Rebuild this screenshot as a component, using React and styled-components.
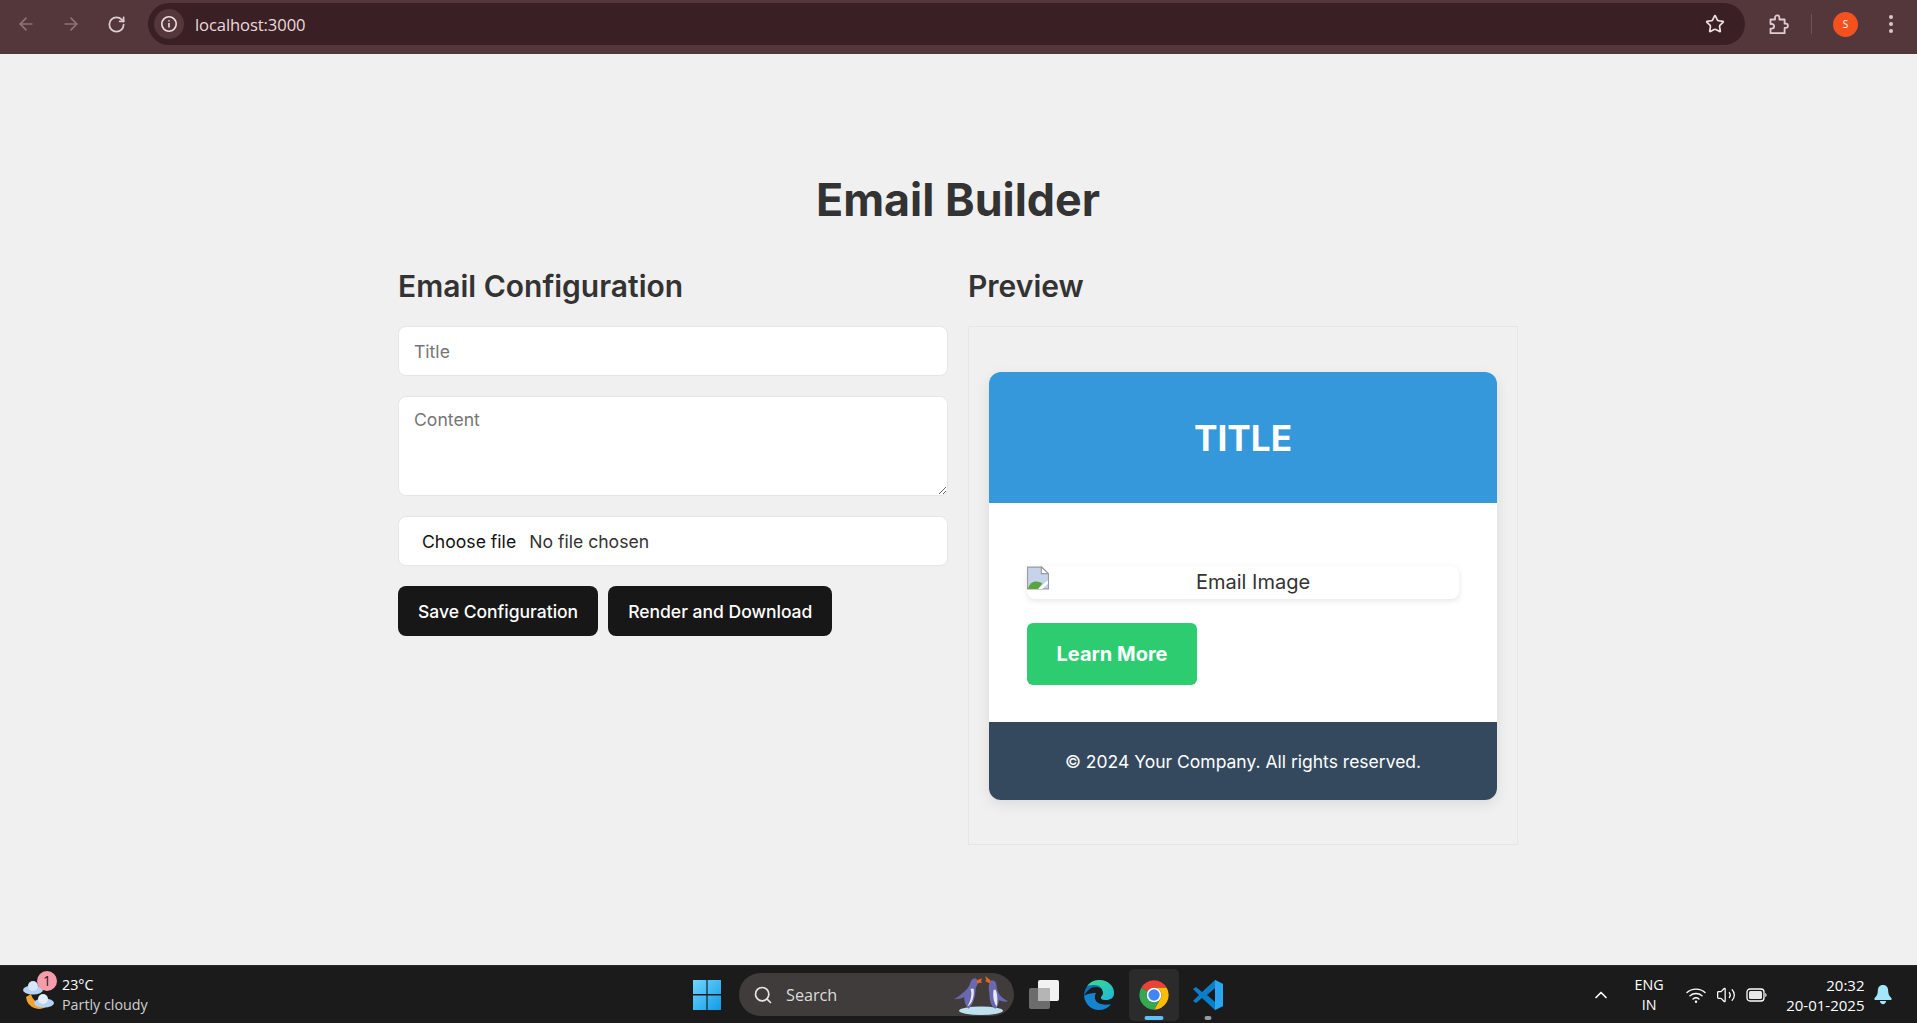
import React from "react";
import styled, { createGlobalStyle } from "styled-components";
import { ArrowLeft, ArrowRight, RotateCw, Star, ChevronUp, Search as SearchGlyph, Volume2 } from "lucide-react";

const Global = createGlobalStyle`
  html, body { margin: 0; padding: 0; height: 100%; overflow: hidden; }
  body { font-family: Inter, "Liberation Sans", sans-serif; background: #f0f0f0; color: #333; }
  * { box-sizing: border-box; }
`;
const Screen = styled.div`display:flex;flex-direction:column;height:1023px;overflow:hidden;`;
const Toolbar = styled.header`height:54px;flex:none;background:#53373b;display:flex;align-items:center;padding:0 0 6px 14px;`;
const NavBtn = styled.span`width:24px;height:24px;display:flex;align-items:center;justify-content:center;margin-right:${p=>p.$mr||21}px;color:${p=>p.$dim?"#8d7478":"#e0cdd0"};`;
const Omnibox = styled.div`width:1597px;height:42px;margin-left:19px;border-radius:21px;background:#3a2024;display:flex;align-items:center;padding:0 20px 0 6px;`;
const InfoChip = styled.span`width:30px;height:30px;border-radius:50%;background:#53373b;display:flex;align-items:center;justify-content:center;margin-right:11px;`;
const Url = styled.span`flex:1;font:16.6px "Open Sans","Liberation Sans",sans-serif;color:#ead9db;letter-spacing:-.1px;`;
const ToolRight = styled.div`display:flex;align-items:center;flex:1;padding-left:23px;`;
const Sep = styled.span`width:1px;height:20px;background:#6f5458;margin:0 21px 0 21px;`;
const Avatar = styled.span`width:25px;height:25px;border-radius:50%;background:#f4511e;color:#fff;font:10px "Open Sans",sans-serif;display:flex;align-items:center;justify-content:center;`;
const Dots = styled.span`display:flex;flex-direction:column;gap:3px;margin-left:31px;`;
const Dot = styled.i`width:4px;height:4px;border-radius:50%;background:#dcc8cb;display:block;`;

const Main = styled.main`flex:1;min-height:0;display:flex;flex-direction:column;align-items:center;padding:119px 1px 0 0;`;
const Heading = styled.h1`margin:0 0 42px;font-size:44.8px;line-height:54px;font-weight:700;color:#333;`;
const Columns = styled.div`width:1120px;display:grid;grid-template-columns:550px 550px;gap:20px;`;
const Column = styled.section`display:flex;flex-direction:column;`;
const SubHeading = styled.h2`margin:0 0 22px;font-size:30px;line-height:35px;font-weight:600;color:#333;`;
const Field = styled.input`width:100%;height:50px;padding:0 15px;margin-bottom:20px;background:#fff;border:1px solid #e6e6e6;border-radius:8px;font:17.6px Inter,sans-serif;color:#333;&::placeholder{color:#757575;}`;
const Area = styled.textarea`display:block;width:100%;height:100px;padding:12px 15px;margin-bottom:20px;background:#fff;border:1px solid #e6e6e6;border-radius:8px;font:17.6px Inter,sans-serif;color:#333;&::placeholder{color:#757575;}`;
const FilePick = styled.div`width:100%;height:50px;padding:0 23px;margin-bottom:20px;background:#fff;border:1px solid #e6e6e6;border-radius:8px;display:flex;align-items:center;font-size:17.6px;`;
const ChooseLabel = styled.span`color:#111;margin-right:13px;`;
const NoFile = styled.span`color:#333;`;
const Actions = styled.div`display:flex;gap:10px;`;
const DarkBtn = styled.button`height:50px;padding:0 20px;border:none;border-radius:8px;background:#171717;color:#fff;font:500 17.5px Inter,sans-serif;`;

const Preview = styled.div`height:519px;padding:45px 20px;border:1px solid #e6e6e6;background:#f0f0f0;`;
const Card = styled.article`border-radius:12px;overflow:hidden;background:#fff;box-shadow:0 4px 14px rgba(0,0,0,.09);`;
const CardHead = styled.div`height:131px;background:#3498db;display:flex;align-items:center;justify-content:center;color:#fff;font-size:35.2px;font-weight:700;`;
const CardBody = styled.div`padding:63px 38px 37px;background:#fff;`;
const ImageBox = styled.div`height:33px;border-radius:8px;background:#fff;box-shadow:0 2px 6px rgba(0,0,0,.1);text-align:center;font-size:20px;line-height:33px;color:#333;margin-bottom:24px;position:relative;`;
const Broken = styled.svg`position:absolute;left:0;top:0;`;
const AltText = styled.span`padding-left:20px;`;
const GreenBtn = styled.button`display:block;width:170px;height:62px;border:none;border-radius:6px;background:#2ecc71;color:#fff;font:700 20px Inter,sans-serif;`;
const CardFoot = styled.div`height:78px;background:#34495e;color:#fff;display:flex;align-items:center;justify-content:center;font-size:17.5px;`;

const Taskbar = styled.footer`height:58px;flex:none;background:#1b1b1b;border-top:1px solid #2a2a2a;display:grid;grid-template-columns:1fr auto 1fr;align-items:center;font-family:"Open Sans","Liberation Sans",sans-serif;`;
const Weather = styled.div`display:flex;align-items:center;padding-left:22px;`;
const WeatherIcon = styled.div`position:relative;width:32px;height:36px;margin-right:8px;`;
const Badge = styled.span`position:absolute;right:-3px;top:-6px;width:20px;height:20px;border-radius:50%;background:#f79cab;color:#222;font-size:14px;display:flex;align-items:center;justify-content:center;`;
const TwoLine = styled.div`display:flex;flex-direction:column;font-size:${p=>p.$fs||14.3}px;line-height:20px;color:#fff;text-align:${p=>p.$align||"left"};`;
const Muted = styled.span`color:#cfcfcf;`;
const Center = styled.div`display:flex;align-items:center;padding-left:12px;`;
const SearchPill = styled.div`width:275px;height:43px;border-radius:22px;background:#403c3c;display:flex;align-items:center;padding:0 2px 0 14px;margin:0 5px 0 17px;color:#dcdcdc;font-size:16.2px;`;
const SearchLabel = styled.span`flex:1;margin-left:13px;`;
const Tile = styled.span`width:${p=>p.$w||50}px;height:52px;display:flex;align-items:center;justify-content:center;position:relative;border-radius:5px;background:${p=>p.$on?"#2b2b2b":"transparent"};`;
const Running = styled.i`position:absolute;bottom:1px;left:50%;transform:translateX(-50%);height:4px;border-radius:2px;width:${p=>p.$w}px;background:${p=>p.$c};`;
const Tray = styled.div`display:flex;align-items:center;justify-content:flex-end;color:#fff;`;
const TrayIcon = styled.span`display:flex;width:${p=>p.$w||30}px;justify-content:center;`;
const Lang = styled(TwoLine)`margin:0 17.5px 0 19px;`;
const Clock = styled(TwoLine)`margin:0 9.5px 0 15px;`;
const Bell = styled.span`display:flex;margin-right:25px;`;

const InfoIcon = () => (<svg width="18" height="18" viewBox="0 0 18 18" fill="none" stroke="#f0e0e2" strokeWidth="1.6"><circle cx="9" cy="9" r="7.2"/><path d="M9 8v4.6M9 5.2v1.4"/></svg>);
const PuzzleIcon = () => (<svg width="22" height="22" viewBox="0 0 22 22" fill="none" stroke="#e0cdd0" strokeWidth="1.8" strokeLinejoin="round"><path d="M2.5 6.5H7V4.6a2.2 2.2 0 0 1 4.4 0v1.9h5.2v4.2h1.2a2.1 2.1 0 0 1 0 4.2h-1.2v5.3H2.5v-4.6h1.3a2.2 2.2 0 0 0 0-4.6H2.5z"/></svg>);
const WinLogo = () => (<svg width="30" height="32" viewBox="0 0 30 32"><defs><linearGradient id="w" x1="0" y1="0" x2="1" y2="1"><stop offset="0" stopColor="#6fd6ff"/><stop offset="1" stopColor="#0f9be8"/></linearGradient></defs><path fill="url(#w)" d="M1 1h13.4v14H1zM15.6 1H29v14H15.6zM1 16.4h13.4V31H1zM15.6 16.4H29V31H15.6z"/></svg>);
const Penguins = () => (<svg width="62" height="42" viewBox="3 0 54 40"><ellipse cx="30" cy="35" rx="21" ry="4" fill="#bfe0ee"/><path d="M25 4c-4 0-5 3-6 7-3 5-9 10-15 13 4 0 7 0 10-2 0 4 1 8 4 11 4-3 7-11 7-20 2-3 3-6 0-9z" fill="#6a68ae"/><path d="M20 14c2 5 0 12-3 17 4-2 7-9 6-17z" fill="#e8e8f2"/><path d="M26 6l5-2-1 3 1 1-5 1z" fill="#e0662a"/><path d="M40 6c4 0 5 3 5 7 1 6 5 10 11 13-3 1-6 0-9-1 0 3-1 6-3 8-5-2-6-9-6-15-1-4-1-9 2-12z" fill="#6a68ae"/><path d="M42 15c-1 6 0 12 3 16 1-5 1-11-1-16z" fill="#e8e8f2"/><path d="M39 6l-5-4 1 4-1 1 5 2z" fill="#e0662a"/></svg>);
const TaskView = () => (<svg width="32" height="32" viewBox="0 0 32 32"><rect x="1" y="9" width="21" height="21" rx="2" fill="#6c6c6c"/><rect x="10" y="1" width="21" height="21" rx="2" fill="#f2f2f2"/><rect x="10" y="9" width="12" height="13" fill="#b5b5b5"/></svg>);
const Edge = () => (<svg width="32" height="32" viewBox="0 0 32 32"><defs><linearGradient id="e1" x1="0" y1="0" x2="1" y2="1"><stop offset="0" stopColor="#3ddc84"/><stop offset="1" stopColor="#1fb6d8"/></linearGradient></defs><path fill="#0c6fb8" d="M1 17C1 8 8 1 16 1c9 0 15 6 15 13 0 5-4 7-8 7-3 0-5-1-5-2 0-2 2-2 2-5 0-4-3-6-7-6-6 0-10 5-12 9z"/><path fill="url(#e1)" d="M4 7c3-4 7-6 12-6 9 0 15 6 15 13 0 5-4 7-8 7-3 0-5-1-5-2 0-2 2-2 2-5 0-5-4-8-8-8-3 0-6 0-8 1z"/><path fill="#1484cf" d="M1 17c1 8 7 14 15 14 5 0 9-2 12-6-3 1-7 1-10 0-5-1-8-6-5-11-5 0-10 1-12 3z"/></svg>);
const ChromeLogo = () => (<svg width="32" height="32" viewBox="0 0 48 48"><path fill="#ea4335" d="M4.95 13A22 22 0 0 1 43.05 13H24A11 11 0 0 0 14.47 18.5Z"/><path fill="#fbbc04" d="M43.05 13A22 22 0 0 1 24 46L33.53 29.5A11 11 0 0 0 24 13Z"/><path fill="#34a853" d="M24 46A22 22 0 0 1 4.95 13L14.47 18.5A11 11 0 0 0 33.53 29.5Z"/><circle cx="24" cy="24" r="11" fill="#fff"/><circle cx="24" cy="24" r="8.5" fill="#4285f4"/></svg>);
const VSCode = () => (<svg width="32" height="32" viewBox="0 0 32 32"><path fill="#0a7fc9" d="M23 1l8 4v22l-8 4-13-12-6 5-3-2 6-6-6-6 3-2 6 5zM23 9l-8 7 8 7z"/><path fill="#2aa5ef" d="M23 1l8 4v22l-8 4z"/></svg>);
const Wifi = () => (<svg width="20" height="18" viewBox="0 0 20 18" fill="none" stroke="#fff" strokeWidth="1.4" strokeLinecap="round"><path d="M1 6.5C6 2 14 2 19 6.5M4 9.8c3.5-3 8.5-3 12 0M7 13c1.8-1.4 4.2-1.4 6 0"/><circle cx="10" cy="15.8" r="1.2" fill="#fff" stroke="none"/></svg>);
const Battery = () => (<svg width="21" height="14" viewBox="0 0 21 14" fill="none"><rect x="1" y="1" width="17" height="12" rx="3" stroke="#fff" strokeWidth="1.3"/><rect x="3" y="3" width="13" height="8" rx="1.5" fill="#e8e8e8"/><path d="M19.3 5v4c.8 0 1.2-1 1.2-2s-.4-2-1.2-2z" fill="#fff"/></svg>);
const BellIcon = () => (<svg width="18" height="20" viewBox="0 0 18 20" fill="#a3e6fb"><path d="M9 0c3.6 0 5.2 2.6 5.2 6 0 3 1 5 3.3 7.3.5.6.1 1.7-.7 1.7H1.2c-.8 0-1.2-1.1-.7-1.7C2.8 11 3.8 9 3.8 6 3.8 2.6 5.4 0 9 0z"/><path d="M5.8 16h6.4c-.3 2-1.6 3.2-3.2 3.2S6.1 18 5.8 16z"/></svg>);
const Cloudy = () => (<svg width="32" height="36" viewBox="0 0 32 36"><path d="M4 20a13 13 0 0 0 23 7C18 28 11 25 9 17z" fill="#f4a12f"/><ellipse cx="11" cy="13" rx="10" ry="4.5" fill="#b5d2f4"/><circle cx="11" cy="9" r="5" fill="#d7e6f8"/><ellipse cx="22" cy="26" rx="10" ry="4.5" fill="#b5d2f4"/><circle cx="21" cy="22" r="5" fill="#e4eefa"/></svg>);
const BrokenImg = () => (<Broken width="22" height="24" viewBox="0 0 20 22" preserveAspectRatio="none"><path d="M.5 1h13l6 6v14H.5z" fill="#c6d3ea" stroke="#9a9aa0"/><path d="M13 1v6h6.5z" fill="#fff" stroke="#9a9aa0"/><path d="M1 21c1-6 6-8 11-6l2 1-4 5z" fill="#5aa63e"/><path d="M10 21l9-8v3l-5 5z" fill="#fff"/></Broken>);

export default function App() {
  return (
    <Screen>
      <Global />
      <Toolbar>
        <NavBtn $dim><ArrowLeft size={20} /></NavBtn>
        <NavBtn $dim><ArrowRight size={20} /></NavBtn>
        <NavBtn $mr={1}><RotateCw size={19} strokeWidth={2.2} /></NavBtn>
        <Omnibox>
          <InfoChip><InfoIcon /></InfoChip>
          <Url>localhost:3000</Url>
          <Star size={20} color="#f0e0e2" strokeWidth={2} />
        </Omnibox>
        <ToolRight>
          <PuzzleIcon />
          <Sep />
          <Avatar>S</Avatar>
          <Dots><Dot /><Dot /><Dot /></Dots>
        </ToolRight>
      </Toolbar>
      <Main>
        <Heading>Email Builder</Heading>
        <Columns>
          <Column>
            <SubHeading>Email Configuration</SubHeading>
            <Field placeholder="Title" />
            <Area placeholder="Content" />
            <FilePick><ChooseLabel>Choose file</ChooseLabel><NoFile>No file chosen</NoFile></FilePick>
            <Actions>
              <DarkBtn>Save Configuration</DarkBtn>
              <DarkBtn>Render and Download</DarkBtn>
            </Actions>
          </Column>
          <Column>
            <SubHeading>Preview</SubHeading>
            <Preview>
              <Card>
                <CardHead>TITLE</CardHead>
                <CardBody>
                  <ImageBox><BrokenImg /><AltText>Email Image</AltText></ImageBox>
                  <GreenBtn>Learn More</GreenBtn>
                </CardBody>
                <CardFoot>© 2024 Your Company. All rights reserved.</CardFoot>
              </Card>
            </Preview>
          </Column>
        </Columns>
      </Main>
      <Taskbar>
        <Weather>
          <WeatherIcon><Cloudy /><Badge>1</Badge></WeatherIcon>
          <TwoLine><span>23°C</span><Muted>Partly cloudy</Muted></TwoLine>
        </Weather>
        <Center>
          <WinLogo />
          <SearchPill>
            <SearchGlyph size={20} color="#e6e6e6" />
            <SearchLabel>Search</SearchLabel>
            <Penguins />
          </SearchPill>
          <Tile $w={50}><TaskView /></Tile>
          <Tile $w={60}><Edge /></Tile>
          <Tile $w={50} $on><ChromeLogo /><Running $w={19} $c="#5cc2f5" /></Tile>
          <Tile $w={58}><VSCode /><Running $w={7} $c="#9a9a9a" /></Tile>
        </Center>
        <Tray>
          <TrayIcon><ChevronUp size={20} /></TrayIcon>
          <Lang $align="center"><span>ENG</span><span>IN</span></Lang>
          <TrayIcon><Wifi /></TrayIcon>
          <TrayIcon><Volume2 size={20} strokeWidth={1.5} /></TrayIcon>
          <TrayIcon><Battery /></TrayIcon>
          <Clock $align="right" $fs={15}><span>20:32</span><span>20-01-2025</span></Clock>
          <Bell><BellIcon /></Bell>
        </Tray>
      </Taskbar>
    </Screen>
  );
}
